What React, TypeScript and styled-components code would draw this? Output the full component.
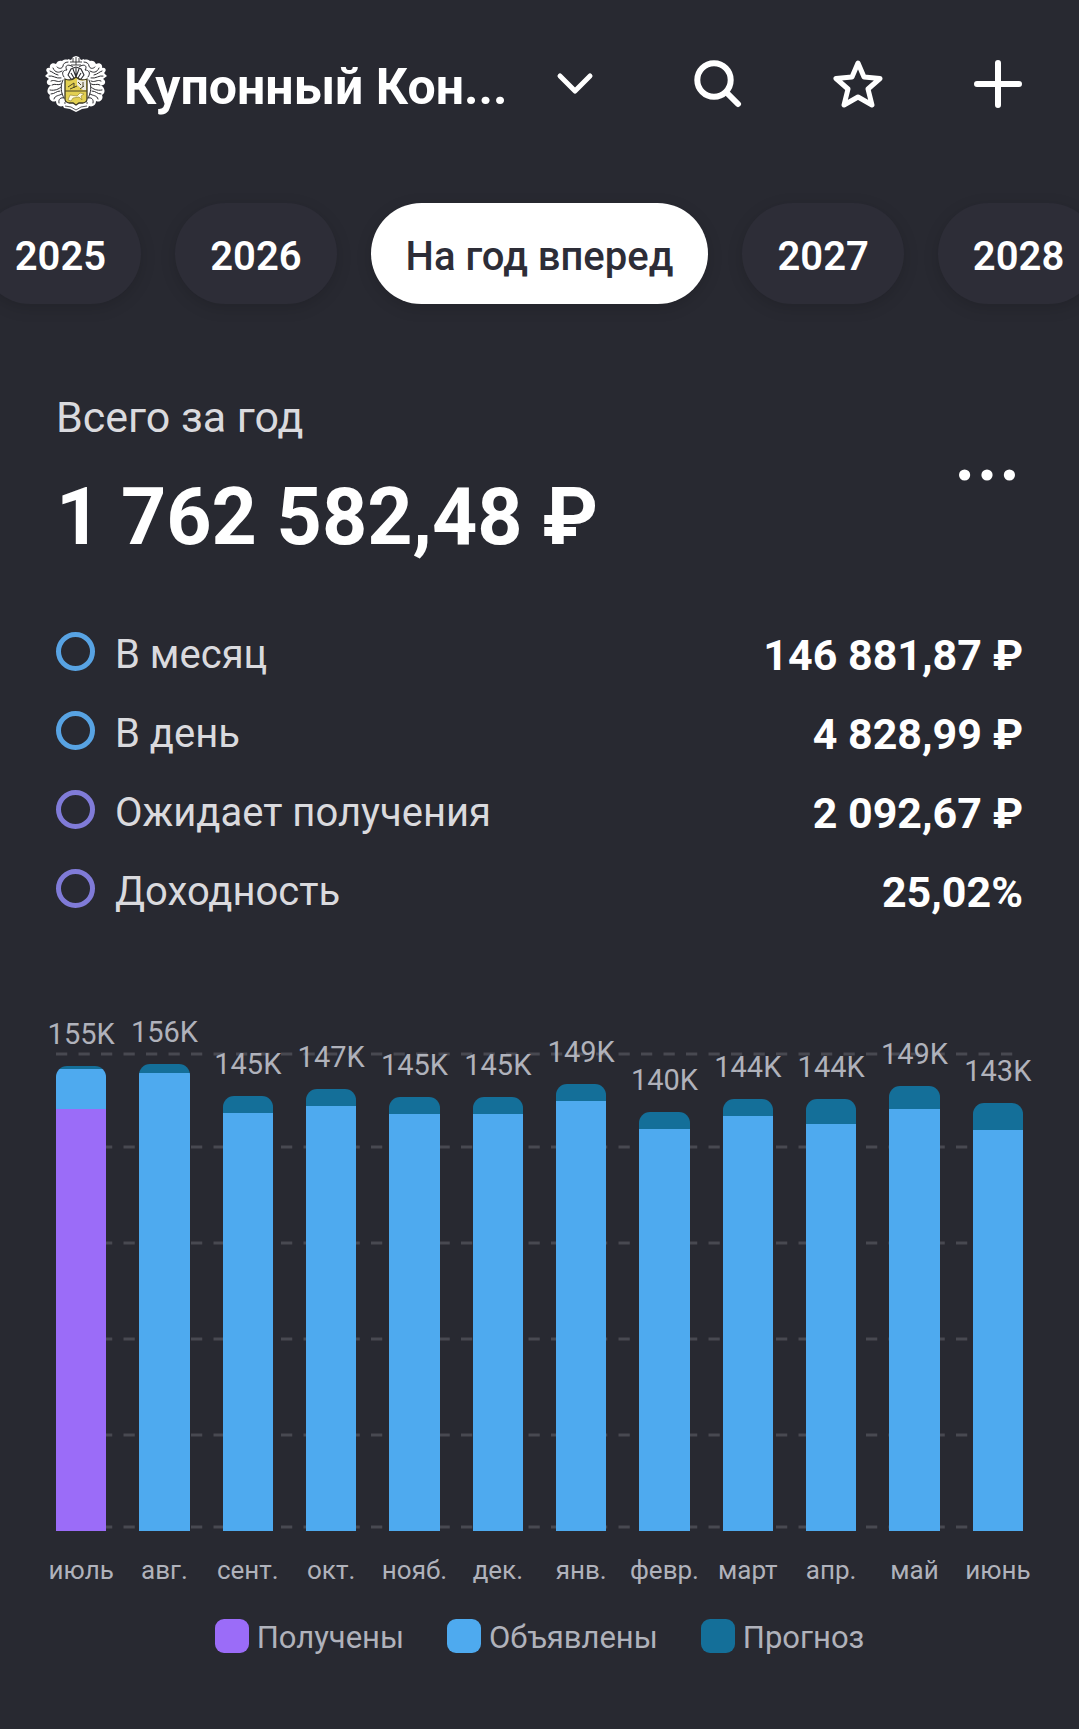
import React from "react";
import styled, { createGlobalStyle } from "styled-components";

const color = {
  page: "#282931",
  chip: "#2d2d37",
  white: "#ffffff",
  label: "#dadade",
  muted: "#b0b2bb",
  grid: "#484951",
  received: "#9b6cf8",
  announced: "#4eaaef",
  forecast: "#146f99",
  ringBlue: "#58a3e3",
  ringViolet: "#807bd8",
};

const GlobalStyle = createGlobalStyle`
  *, *::before, *::after { box-sizing: border-box; }
  html, body { margin: 0; background: ${color.page}; }
  body {
    font-family: Roboto, "Noto Sans", sans-serif;
    color: ${color.white};
    overflow-x: hidden;
  }
  button { font: inherit; color: inherit; background: none; border: 0; padding: 0; cursor: pointer; }
  h1, h2, p, dl, dt, dd, figure, ul { margin: 0; padding: 0; }
  svg { display: block; }
`;

const Screen = styled.main`
  display: flex;
  flex-direction: column;
  padding-bottom: 72px;
`;

const Header = styled.header`
  display: flex;
  align-items: center;
  padding: 52px 51px 0 45px;
`;

const Account = styled.button`
  display: flex;
  align-items: center;
  flex: none;
  gap: 17px;
`;

const AccountName = styled.span`
  padding-top: 6px;
  font-size: 50px;
  line-height: 58px;
  font-weight: 700;
  white-space: nowrap;
`;

const Chevron = styled.svg`
  margin-left: 32px;
`;

const Actions = styled.div`
  display: flex;
  gap: 80px;
  margin-left: auto;
`;

const IconButton = styled.button`
  display: grid;
  place-items: center;
  width: 60px;
  height: 60px;
`;

const Periods = styled.nav`
  display: flex;
  justify-content: center;
  gap: 34px;
  padding: 32px 0;
  margin-top: 55px;
  overflow: hidden;
`;

const Chip = styled.button<{ $active?: boolean }>`
  flex: none;
  padding: 6px 35px 0;
  font-size: 40px;
  line-height: 95px;
  font-weight: ${(p) => (p.$active ? 500 : 600)};
  white-space: nowrap;
  border-radius: 51px;
  color: ${(p) => (p.$active ? color.chip : color.white)};
  background: ${(p) => (p.$active ? color.white : color.chip)};
  box-shadow: 0 4px 16px rgba(0, 0, 0, 0.14);
`;

const Content = styled.section`
  padding: 0 56px;
`;

const Summary = styled.div`
  display: flex;
  align-items: center;
  justify-content: space-between;
  margin-top: 56px;
`;

const SummaryLabel = styled.h2`
  font-size: 43px;
  line-height: 50px;
  font-weight: 400;
  color: ${color.label};
`;

const SummaryTotal = styled.p`
  margin-top: 25px;
  font-size: 79px;
  line-height: 100px;
  font-weight: 700;
  white-space: nowrap;
`;

const MoreButton = styled(IconButton)`
  width: 72px;
  margin-bottom: 10px;
`;

const Stats = styled.dl`
  margin-top: 48px;
`;

const StatRow = styled.div`
  display: flex;
  align-items: center;
  height: 79px;
`;

const Ring = styled.span<{ $color: string }>`
  width: 39px;
  height: 39px;
  margin: 0 20px 6px 0;
  border: 5px solid ${(p) => p.$color};
  border-radius: 50%;
`;

const StatName = styled.dt`
  font-size: 40px;
  line-height: 48px;
  color: ${color.label};
`;

const StatValue = styled.dd`
  margin-left: auto;
  font-size: 43px;
  line-height: 48px;
  font-weight: 700;
`;

const Chart = styled.figure`
  margin-top: 80px;
`;

const Plot = styled.div`
  position: relative;
  height: 520px;
`;

const GridLines = styled.svg`
  position: absolute;
  inset: 0;
  width: 100%;
  height: 100%;
  stroke: ${color.grid};
  stroke-width: 3;
`;

const Columns = styled.div`
  position: relative;
  display: grid;
  grid-template-columns: repeat(12, minmax(0, 1fr));
  column-gap: 33px;
  height: 100%;
`;

const Column = styled.div`
  display: flex;
  flex-direction: column;
  align-items: center;
  justify-content: flex-end;
`;

const BarValue = styled.span`
  margin-bottom: 15px;
  font-size: 29px;
  line-height: 34px;
  color: ${color.muted};
`;

const Bar = styled.div`
  display: flex;
  flex-direction: column;
  width: 100%;
  border-radius: 11px 11px 0 0;
  overflow: hidden;
`;

const Segment = styled.div<{ $color: string }>`
  background: ${(p) => p.$color};
`;

const Months = styled.div`
  display: grid;
  grid-template-columns: repeat(12, minmax(0, 1fr));
  column-gap: 33px;
  margin-top: 23px;
`;

const Month = styled.span`
  display: flex;
  justify-content: center;
  font-size: 26px;
  line-height: 32px;
  color: ${color.muted};
  white-space: nowrap;
`;

const Legend = styled.figcaption`
  display: flex;
  justify-content: center;
  gap: 43px;
  margin-top: 32px;
`;

const LegendItem = styled.span`
  display: flex;
  align-items: center;
  gap: 8px;
  font-size: 31px;
  line-height: 40px;
  color: ${color.muted};
`;

const Swatch = styled.span<{ $color: string }>`
  width: 34px;
  height: 34px;
  margin-bottom: 4px;
  border-radius: 9px;
  background: ${(p) => p.$color};
`;

const periods = ["2025", "2026", "На год вперед", "2027", "2028"];
const activePeriod = "На год вперед";

const stats = [
  { name: "В месяц", value: "146 881,87 ₽", ring: color.ringBlue },
  { name: "В день", value: "4 828,99 ₽", ring: color.ringBlue },
  { name: "Ожидает получения", value: "2 092,67 ₽", ring: color.ringViolet },
  { name: "Доходность", value: "25,02%", ring: color.ringViolet },
];

// Amounts are in thousands of roubles.
const months = [
  { name: "июль", received: 140.7, announced: 13.2, forecast: 1 },
  { name: "авг.", received: 0, announced: 152.6, forecast: 3 },
  { name: "сент.", received: 0, announced: 139.3, forecast: 5.5 },
  { name: "окт.", received: 0, announced: 141.5, forecast: 5.8 },
  { name: "нояб.", received: 0, announced: 138.9, forecast: 5.7 },
  { name: "дек.", received: 0, announced: 138.9, forecast: 5.7 },
  { name: "янв.", received: 0, announced: 143.3, forecast: 5.5 },
  { name: "февр.", received: 0, announced: 134.1, forecast: 5.5 },
  { name: "март", received: 0, announced: 138.3, forecast: 5.7 },
  { name: "апр.", received: 0, announced: 135.8, forecast: 8.2 },
  { name: "май", received: 0, announced: 140.8, forecast: 7.8 },
  { name: "июнь", received: 0, announced: 133.7, forecast: 9.1 },
];

const PX_PER_THOUSAND = 3;
const gridLevels = [43, 136, 232, 328, 424, 516];

const barPx = (amount: number) => Math.round(amount * PX_PER_THOUSAND);

function CrestLogo() {
  const half = (
    <g>
      <path
        d="M31 12 C27 7 21 5 17 8 C15 7 12 8 11 11 C7 9 4 12 5 15 C1 14 0 18 3 20 L0 23 L4 26 C0 28 2 33 6 32 C2 35 1 40 5 42 C3 46 7 50 11 48 C11 53 16 55 20 52 L31 58 Z"
        fill="#fff"
      />
      <g fill="none" stroke="#2c2c30" strokeWidth="1" strokeLinecap="round">
        <path d="M28 14 C23 10 19 13 22 17 C18 17 16 20 19 24" />
        <path d="M23 9 C20 9 18 11 18 13 C17 16 14 16 12 14" />
        <path d="M8 15 C10 20 14 20 17 18 M5 18 C8 19 9 21 13 22" />
        <path d="M4 23 C8 22 11 26 16 25 M6 28 C10 26 12 30 16 28" />
        <path d="M7 32 C10 30 13 33 16 31 M5 37 C10 38 14 36 16 34" />
        <path d="M6 41 C10 41 11 38 15 38 M9 46 C10 42 14 43 17 41" />
        <path d="M14 50 C13 46 16 44 19 45 M18 27 C15 33 16 40 19 45" />
        <path d="M24 50 C22 47 19 48 20 51" />
      </g>
    </g>
  );
  return (
    <svg width="62" height="62" viewBox="0 0 62 62" aria-hidden="true">
      <path d="M23 6 L26 7 L28 4 L31 3 L34 4 L36 7 L39 6 L37 15 H25 Z" fill="#fff" />
      {half}
      <g transform="translate(62 0) scale(-1 1)">{half}</g>
      <path d="M25 9 H37 M26 12 H36 M28 5 V9 M31 4 V12 M34 5 V9" stroke="#2c2c30" strokeWidth="0.9" />
      <path d="M23 22 L26 16 L31 14 L36 16 L39 22 L36 26 H26 Z" fill="#fff" stroke="#2c2c30" strokeWidth="1.1" />
      <path d="M28 16 L31 24 L34 16 M26 20 L29 25 M36 20 L33 25 M31 15 V25" fill="none" stroke="#2c2c30" strokeWidth="1.1" />
      <path d="M20 26 C25 28 28 27 31 24 C34 27 37 28 42 26 V46 C42 48 40 50 37 50 H34 L31 52 L28 50 H25 C22 50 20 48 20 46 Z" fill="#e3d052" stroke="#3b3720" strokeWidth="1.3" />
      <path d="M32 26 C35 28 38 28 41 27 V37 H38 L32 32 Z" fill="#ecebe2" />
      <path d="M20 38 H42 M23 34 L29 30 V35 M25 36 L32 33 M33 29 L36 32 M38 29 V34 M35 36 L39 33" fill="none" stroke="#4a4524" strokeWidth="1" />
      <path d="M23 47 L25 42 L32 43 L35 40 L39 41 L36 43 L37 47 L34 44 L28 45 L26 48 Z" fill="#fffbe0" stroke="#8c7e2a" strokeWidth="0.6" />
      <path d="M17 51 C21 50 22 53 26 53 L31 55 L36 53 C40 53 41 50 45 51 L43 55 L37 56 L31 59 L25 56 L19 55 Z" fill="#fff" />
      <path d="M20 53 L26 54 L31 57 L36 54 L42 53" fill="none" stroke="#2c2c30" strokeWidth="0.8" />
    </svg>
  );
}

export default function App() {
  return (
    <>
      <GlobalStyle />
      <Screen>
        <Header>
          <Account type="button" aria-haspopup="listbox">
            <CrestLogo />
            <AccountName>Купонный Кон...</AccountName>
            <Chevron width="38" height="24" viewBox="0 0 38 24" fill="none" aria-hidden="true">
              <path d="M4 4 L19 19 L34 4" stroke="#fff" strokeWidth="5" strokeLinecap="round" strokeLinejoin="round" />
            </Chevron>
          </Account>
          <Actions>
            <IconButton type="button" aria-label="Поиск">
              <svg width="48" height="48" viewBox="0 0 48 48" fill="none" stroke="#fff" strokeLinecap="round">
                <circle cx="20" cy="20" r="16.7" strokeWidth="6" />
                <path d="M33 33 L44 44" strokeWidth="6" />
              </svg>
            </IconButton>
            <IconButton type="button" aria-label="Избранное">
              <svg width="50" height="50" viewBox="0 0 50 50" fill="none" stroke="#fff" strokeWidth="5" strokeLinejoin="round">
                <path d="M25 4 L31 18 L47 19.5 L35 30 L39 46 L25 38 L11 46 L15 30 L3 19.5 L19 18 Z" />
              </svg>
            </IconButton>
            <IconButton type="button" aria-label="Добавить">
              <svg width="48" height="48" viewBox="0 0 48 48" fill="none" stroke="#fff" strokeWidth="6" strokeLinecap="round">
                <path d="M24 3 V45 M3 24 H45" />
              </svg>
            </IconButton>
          </Actions>
        </Header>

        <Periods aria-label="Период">
          {periods.map((period) => (
            <Chip key={period} type="button" $active={period === activePeriod} aria-pressed={period === activePeriod}>
              {period}
            </Chip>
          ))}
        </Periods>

        <Content>
          <Summary>
            <div>
              <SummaryLabel>Всего за год</SummaryLabel>
              <SummaryTotal>1 762 582,48 ₽</SummaryTotal>
            </div>
            <MoreButton type="button" aria-label="Ещё">
              <svg width="56" height="12" viewBox="0 0 56 12" fill="#fff">
                <circle cx="5.6" cy="6" r="5.6" />
                <circle cx="28" cy="6" r="5.6" />
                <circle cx="50.4" cy="6" r="5.6" />
              </svg>
            </MoreButton>
          </Summary>

          <Stats>
            {stats.map((stat) => (
              <StatRow key={stat.name}>
                <Ring $color={stat.ring} />
                <StatName>{stat.name}</StatName>
                <StatValue>{stat.value}</StatValue>
              </StatRow>
            ))}
          </Stats>

          <Chart>
            <Plot>
              <GridLines aria-hidden="true">
                {gridLevels.map((y) => (
                  <line key={y} x1="0" x2="100%" y1={y} y2={y} strokeDasharray="11.25" />
                ))}
              </GridLines>
              <Columns>
                {months.map((m) => (
                  <Column key={m.name}>
                    <BarValue>{Math.round(m.received + m.announced + m.forecast)}K</BarValue>
                    <Bar>
                      <Segment $color={color.forecast} style={{ height: barPx(m.forecast) }} />
                      <Segment $color={color.announced} style={{ height: barPx(m.announced) }} />
                      <Segment $color={color.received} style={{ height: barPx(m.received) }} />
                    </Bar>
                  </Column>
                ))}
              </Columns>
            </Plot>
            <Months>
              {months.map((m) => (
                <Month key={m.name}>{m.name}</Month>
              ))}
            </Months>
            <Legend>
              <LegendItem>
                <Swatch $color={color.received} />
                Получены
              </LegendItem>
              <LegendItem>
                <Swatch $color={color.announced} />
                Объявлены
              </LegendItem>
              <LegendItem>
                <Swatch $color={color.forecast} />
                Прогноз
              </LegendItem>
            </Legend>
          </Chart>
        </Content>
      </Screen>
    </>
  );
}
